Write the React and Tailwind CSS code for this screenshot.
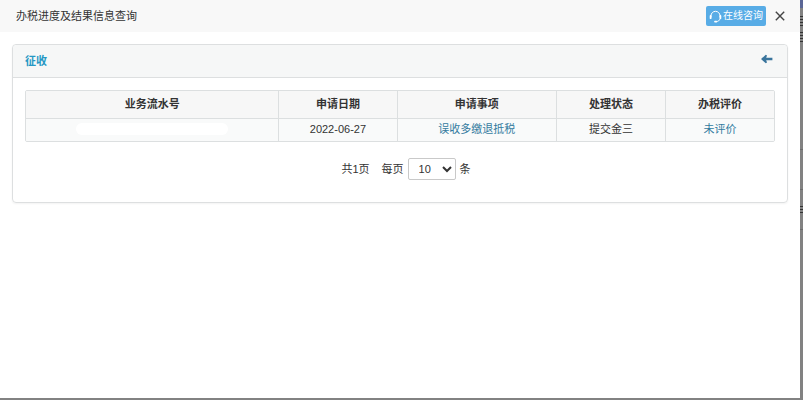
import React from 'react';

const columns = [
  { title: '业务流水号', width: 'w-[33.8%]' },
  { title: '申请日期', width: 'w-[15.8%]' },
  { title: '申请事项', width: 'w-[21.3%]' },
  { title: '处理状态', width: 'w-[14.6%]' },
  { title: '办税评价', width: 'w-[14.5%]' },
];

const rows = [
  { id: 1, date: '2022-06-27', item: '误收多缴退抵税', status: '提交金三', review: '未评价' },
];

function HeadsetIcon() {
  return (
    <svg width="13" height="13" viewBox="0 0 13 13" fill="none" stroke="currentColor" strokeLinecap="round">
      <path d="M2 7V5.8a4.5 4.5 0 0 1 9 0V7" strokeWidth="1" />
      <path d="M1.6 6v2.2M11.4 6v2.2" strokeWidth="1.8" />
      <path d="M11 9c-.4 1.7-1.8 2.4-3.6 2.6" strokeWidth="1" />
      <path d="M6 11.6h1.4" strokeWidth="1.8" />
    </svg>
  );
}

function CloseIcon() {
  return (
    <svg width="10" height="10" viewBox="0 0 10 10" fill="none" stroke="currentColor" strokeWidth="1.4">
      <path d="M.8.8l8.4 8.4M9.2.8L.8 9.2" />
    </svg>
  );
}

function BackIcon() {
  return (
    <svg width="12" height="10" viewBox="0 0 12 10" fill="currentColor">
      <path d="M0 5L4.8.8 6 1.4 5.2 3.8H11.4V6.2H5.2L6 8.6 4.8 9.2z" />
    </svg>
  );
}

function DialogHeader() {
  return (
    <header className="flex h-8 items-center bg-[#f8f8f8] pr-3.5 pl-4">
      <h1 className="flex-1 text-[11px] leading-4">办税进度及结果信息查询</h1>
      <button type="button" className="flex h-5 items-center gap-px rounded-xs bg-[#58ace6] px-[3px] text-[10px] leading-4 text-white">
        <HeadsetIcon />
        在线咨询
      </button>
      <button type="button" aria-label="关闭" className="ml-2 p-px text-[#444]">
        <CloseIcon />
      </button>
    </header>
  );
}

function ResultTable() {
  return (
    <div className="overflow-hidden rounded-xs border border-[#dcdfe0]">
      <table className="w-full table-fixed border-collapse text-center text-[11px] leading-4">
        <thead>
          <tr className="bg-[#f7f7f7]">
            {columns.map((col) => (
              <th key={col.title} className={`${col.width} border-r border-[#dcdfe0] pt-[5px] pb-1.5 font-bold last:border-r-0`}>
                {col.title}
              </th>
            ))}
          </tr>
        </thead>
        <tbody>
          {rows.map((row) => (
            <tr key={row.id} className="border-t border-[#dcdfe0] bg-[#f9fafa] [&>td]:border-r [&>td]:border-[#dcdfe0] [&>td]:pt-0.5 [&>td]:pb-1 [&>td:last-child]:border-r-0">
              <td>
                <div className="mx-auto h-3 w-3/5 rounded-full bg-white" />
              </td>
              <td>{row.date}</td>
              <td><a href="#item" className="text-[#337a9f]">{row.item}</a></td>
              <td>{row.status}</td>
              <td><a href="#review" className="text-[#337a9f]">{row.review}</a></td>
            </tr>
          ))}
        </tbody>
      </table>
    </div>
  );
}

function Pagination() {
  return (
    <div className="mt-4 flex items-center justify-center pl-3 text-[11px] leading-4">
      <span>共1页</span>
      <label htmlFor="page-size" className="ml-3">每页</label>
      <div className="relative ml-1">
        <select
          id="page-size"
          defaultValue="10"
          className="h-[22px] w-12 appearance-none rounded-xs border border-[#c9c9c9] bg-white pl-2.5 text-[11px] leading-4"
        >
          <option>10</option>
          <option>20</option>
          <option>50</option>
        </select>
        <svg className="pointer-events-none absolute top-2 right-1" width="10" height="7" viewBox="0 0 10 7" fill="none" stroke="#333" strokeWidth="2">
          <path d="M1 1l4 4 4-4" />
        </svg>
      </div>
      <span className="ml-1">条</span>
    </div>
  );
}

// Sliver of the dimmed page that stays visible beside the dialog
function Backdrop() {
  return (
    <div className="flex w-[3px] flex-col bg-[#828282]">
      <div className="h-2 bg-[#5b6696]" />
      <div className="h-2" />
      <div className="h-2.5 bg-[repeating-linear-gradient(#333_0_1px,#828282_1px_3px)]" />
      <div className="mt-1.5 h-2.5 bg-[repeating-linear-gradient(#333_0_1px,#828282_1px_3px)]" />
      <div className="h-27 border-b border-[#6c6c6c]" />
      <div className="h-10 border-b border-[#6c6c6c]" />
      <div className="mt-4 h-2 bg-[repeating-linear-gradient(#333_0_1px,#828282_1px_3px)]" />
      <div className="h-4 border-b border-[#6c6c6c]" />
    </div>
  );
}

export default function App() {
  return (
    <div className="flex min-h-screen bg-[#828282] font-['Liberation_Sans','Noto_Sans_CJK_SC',sans-serif] text-[#333]">
      <div className="mb-0.5 flex-1 bg-white">
        <DialogHeader />
        <section className="mx-3 mt-3 rounded border border-[#dddfe0] shadow-xs">
          <div className="flex h-[33px] items-center justify-between rounded-t border-b border-[#dddfe0] bg-[#f6f7f7] px-3">
            <h2 className="text-[11px] leading-4 font-bold text-[#2598c4]">征收</h2>
            <button type="button" aria-label="返回" className="mr-0.5 mb-1 text-[#39749c]">
              <BackIcon />
            </button>
          </div>
          <div className="px-3 pt-3 pb-[22px]">
            <ResultTable />
            <Pagination />
          </div>
        </section>
      </div>
      <Backdrop />
    </div>
  );
}
